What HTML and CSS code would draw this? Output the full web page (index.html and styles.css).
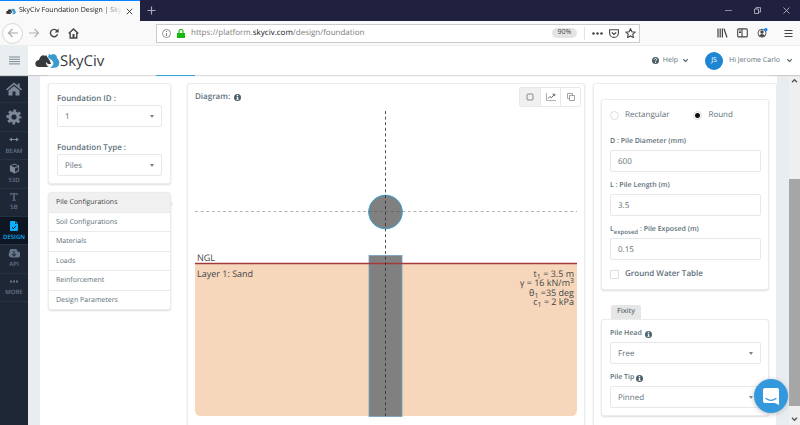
FILE: index.html
```html
<!DOCTYPE html>
<html lang="en">
<head>
<meta charset="utf-8">
<title>SkyCiv Foundation Design</title>
<link rel="stylesheet" href="styles.css">
</head>
<body>
<svg class="defs" aria-hidden="true">
  <symbol id="mark" viewBox="0 0 25 16">
    <path fill="#373a3d" d="M1 13C-1 9 2 7 4 7C5 3 8 1 10 3L11 2L13 5L15 8L16 11L13 11L11 9C11 12 12 13 14 14H4Q2 14 1 13Z"/>
    <path fill="#3b9bd0" d="M13 4L14 1L16 2L18 1C20 1 22 2 22 5C24 7 25 9 24 11C24 14 21 15 15 15C18 13 19 11 18 9C17 6 15 7 13 4Z"/>
  </symbol>
  <symbol id="info" viewBox="0 0 10 10">
    <circle cx="5" cy="5" r="5" fill="#4b626d"/>
    <path fill="#fff" d="M4 1.4h2v1.5H4zM3.5 3.9H6v3.4h.8v1H3.4v-1h.8V4.9h-.7z"/>
  </symbol>
  <symbol id="chev" viewBox="0 0 8 6"><path d="M1.3 1.3L4 4.2L6.7 1.3" fill="none" stroke="#5d707a" stroke-width="1.5"/></symbol>
</svg>

<div class="titlebar">
  <div class="tab">
    <svg width="10" height="7"><use href="#mark"/></svg>
    <span class="tab-title">SkyCiv Foundation Design | Sky</span>
    <button class="plain" aria-label="Close tab"><svg width="7" height="7" viewBox="0 0 7 7"><path d="M.8.8l5.4 5.4M6.2.8L.8 6.2" stroke="#444"/></svg></button>
  </div>
  <button class="plain new-tab" aria-label="New tab"><svg width="9" height="9" viewBox="0 0 9 9"><path d="M4.5.5v8M.5 4.5h8" stroke="#a9a9ba" stroke-width="1.2"/></svg></button>
  <div class="window-buttons">
    <button class="plain" aria-label="Minimize"><svg width="7" height="7" viewBox="0 0 7 7"><path d="M0 3.5h7" stroke="#a5a5b6" stroke-width=".8"/></svg></button>
    <button class="plain" aria-label="Restore"><svg width="7" height="7" viewBox="0 0 7 7"><path d="M.5 2h4v4.500h-4zM2 2V.6h4.500v4.400H4.600" fill="none" stroke="#c4c4d0" stroke-width=".8"/></svg></button>
    <button class="plain" aria-label="Close"><svg width="7" height="7" viewBox="0 0 7 7"><path d="M.5.5l6 6M6.500.5l-6 6" stroke="#c4c4d0" stroke-width=".8"/></svg></button>
  </div>
</div>

<div class="toolbar">
  <button class="plain back" aria-label="Back"><svg width="12" height="10" viewBox="0 0 12 10"><path d="M5.500 1L1.500 5l4 4M1.500 5H11" fill="none" stroke="#aaa" stroke-width="1.200"/></svg></button>
  <button class="plain fwd" aria-label="Forward"><svg width="12" height="10" viewBox="0 0 12 10"><path d="M6.500 1l4 4l-4 4M10.500 5H1" fill="none" stroke="#b2b2b2" stroke-width="1.200"/></svg></button>
  <button class="plain" aria-label="Reload"><svg width="10" height="10" viewBox="0 0 10 10"><path d="M8 2.700A3.700 3.700 0 1 0 8.600 6.300" fill="none" stroke="#444" stroke-width="1.400"/><path d="M9.600.5v4H5.600z" fill="#444"/></svg></button>
  <button class="plain" aria-label="Home"><svg width="11" height="11" viewBox="0 0 11 11"><path d="M.7 5.600L5.500 1l4.800 4.600M2.200 5v5h6.600V5" fill="none" stroke="#444" stroke-width="1.400"/><path d="M4.500 6h2v4h-2z" fill="#444"/></svg></button>
  <div class="urlbar">
    <svg width="9" height="9" viewBox="0 0 9 9"><circle cx="4.500" cy="4.500" r="4" fill="none" stroke="#777" stroke-width=".8"/><path d="M4.500 2v1M4.500 4v3" stroke="#777"/></svg>
    <svg width="8" height="9" viewBox="0 0 8 9"><path d="M0 4h8v5H0z" fill="#16b80d"/><path d="M2 4.500V2.500a2 2 0 0 1 4 0v2" fill="none" stroke="#16b80d" stroke-width="1.200"/></svg>
    <span class="url">https://platform.<b>skyciv.com</b>/design/foundation</span>
    <span class="zoom">90%</span>
    <span class="url-sep"></span>
    <svg width="11" height="3" viewBox="0 0 11 3" fill="#444"><circle cx="1.500" cy="1.500" r="1.300"/><circle cx="5.500" cy="1.500" r="1.300"/><circle cx="9.500" cy="1.500" r="1.300"/></svg>
    <svg width="10" height="9" viewBox="0 0 10 9" fill="none" stroke="#444" stroke-width="1.100"><path d="M.6.8h8.800v3.400a4.400 4.200 0 0 1-8.800 0z"/><path d="M2.800 3.500L5 5.500l2.200-2"/></svg>
    <svg width="11" height="10" viewBox="0 0 11 10"><path d="M5.500.8l1.400 2.900 3.300.4-2.400 2.200.6 3.200-2.900-1.600-2.900 1.600.6-3.200L.8 4.100l3.300-.4z" fill="none" stroke="#444" stroke-width="1.100"/></svg>
  </div>
  <div class="tools">
    <svg width="11" height="10" viewBox="0 0 11 10" fill="none" stroke="#444" stroke-width="1.200"><path d="M1 .5v9M3.200.5v9M5.400.5v9M7 .8l3 8.700"/></svg>
    <svg width="11" height="10" viewBox="0 0 11 10" fill="none" stroke="#444" stroke-width="1.100"><rect x=".7" y=".9" width="9.600" height="8" rx="1"/><path d="M5 1v8M2 3h2M2 4.500h2"/></svg>
    <svg width="11" height="10" viewBox="0 0 11 10"><circle cx="5" cy="5.200" r="4" fill="none" stroke="#555"/><circle cx="5" cy="4" r="1.700" fill="#444"/><path d="M2 7.500q3-3 6 0q-3 2.500-6 0" fill="#444"/><circle cx="8.800" cy="1.800" r="1.700" fill="#0a84ff"/></svg>
    <button class="plain" aria-label="Menu"><svg width="9" height="9" viewBox="0 0 9 9"><path d="M.5 1.500h8M.5 4.500h8M.5 7.500h8" stroke="#444" stroke-width="1.100"/></svg></button>
  </div>
</div>

<header class="app-header">
  <button class="plain burger" aria-label="Toggle sidebar"><svg width="11" height="9" viewBox="0 0 11 9"><path d="M0 1h11M0 3.300h11M0 5.600h11M0 7.900h11" stroke="#7f8b93" stroke-width="1"/></svg></button>
  <a class="brand" href="#"><svg width="25" height="16"><use href="#mark"/></svg><span>SkyCiv</span></a>
  <button class="plain help"><svg width="7" height="7" viewBox="0 0 10 10"><circle cx="5" cy="5" r="5" fill="#4b5e68"/><path d="M3.300 3.800c0-2.300 3.500-2.200 3.500-.1C6.800 5 5 4.800 5 6.300M5 7.200v1.300" fill="none" stroke="#fff" stroke-width="1.300"/></svg>Help<svg width="7" height="5"><use href="#chev"/></svg></button>
  <button class="plain user"><span class="avatar">JS</span>Hi Jerome Carlo<svg width="7" height="5"><use href="#chev"/></svg></button>
</header>

<div class="shell">
  <div class="rail">
    <nav class="sidebar">
      <a href="#" aria-label="Home"><svg width="16" height="14" viewBox="0 0 16 14" fill="#7c8898"><path d="M8 .5L0 7.200l1 1.200L8 2.600l7 5.800 1-1.200-2.300-2V1.500h-2V3.600z"/><path d="M8 4L2.500 8.500V13.500h4V9.500h3v4h4v-5z"/></svg></a>
      <a href="#" aria-label="Settings"><svg width="16" height="16" viewBox="0 0 16 16"><circle cx="8" cy="8" r="4.200" fill="none" stroke="#7c8898" stroke-width="3.200"/><circle cx="8" cy="8" r="6.300" fill="none" stroke="#7c8898" stroke-width="2.600" stroke-dasharray="2.700 2.248" stroke-dashoffset="1.350"/></svg></a>
      <a href="#"><svg width="10" height="5" viewBox="0 0 10 5"><path d="M1 2.500h8" stroke="#7c8898"/><path d="M0 2.500L3 .5v4zM10 2.500L7 .5v4z" fill="#7c8898"/></svg>BEAM</a>
      <a href="#"><svg width="11" height="11" viewBox="0 0 11 11"><path d="M5.500.6l4.600 1.900v5.800L5.500 10.400.9 8.300V2.500z" fill="#7c8898"/><path d="M1.800 2.800L5.500 1.400l3.700 1.400-3.700 1.600z" fill="#222c3b"/><path d="M6 5.200l3.200-1.300v3.700L6 9.100z" fill="#222c3b"/></svg>S3D</a>
      <a href="#"><svg width="8" height="8" viewBox="0 0 8 8"><path d="M.3.300h7.400v2h-.8L6.500 1.300H4.700v5.500l1 .3v.6H2.300v-.6l1-.3V1.300H1.500l-.4 1H.3z" fill="#66758a"/></svg>SB</a>
      <a href="#" class="active"><svg width="8" height="10" viewBox="0 0 8 10"><path d="M1 0h4v3h3v6q0 1-1 1H1q-1 0-1-1V1q0-1 1-1zM5.500 0L8 2.500H5.500z" fill="#0bb0fc"/><path d="M2 6.500l1.300 1.200L6 5" fill="none" stroke="#0d1622"/></svg>DESIGN</a>
      <a href="#"><svg width="12" height="9" viewBox="0 0 12 9"><path d="M3 8.500A3 3 0 0 1 1.500 3.500A4 3.800 0 0 1 9.500 2.500A3 3 0 0 1 9.500 8.500z" fill="#66758a"/><path d="M6 2v5M4 5l2 2.300L8 5" fill="none" stroke="#1d2736"/></svg>API</a>
      <a href="#"><svg width="8" height="3" viewBox="0 0 8 3" fill="#66758a"><path d="M0 .5h2v2H0zM3 .5h2v2H3zM6 .5h2v2H6z"/></svg>MORE</a>
    </nav>
  </div>

  <main class="page">
    <div class="tabline"><span></span></div>
    <div class="columns">
      <div class="left">
        <section class="card setup">
          <label for="fid">Foundation ID :</label>
          <div class="select"><select id="fid"><option>1</option></select></div>
          <label for="ftype">Foundation Type :</label>
          <div class="select"><select id="ftype"><option>Piles</option></select></div>
        </section>
        <nav class="card steps">
          <a href="#" class="current">Pile Configurations</a>
          <a href="#">Soil Configurations</a>
          <a href="#">Materials</a>
          <a href="#">Loads</a>
          <a href="#">Reinforcement</a>
          <a href="#">Design Parameters</a>
        </nav>
      </div>

      <section class="card diagram">
        <div class="diagram-head">
          <h2>Diagram:</h2>
          <svg width="7" height="7"><use href="#info"/></svg>
          <div class="views">
            <button class="on" aria-label="Section view"><svg width="8" height="8" viewBox="0 0 8 8"><rect x="1" y="1" width="6" height="6" rx="1" fill="none" stroke="#888"/></svg></button>
            <button aria-label="Graph view"><svg width="10" height="8" viewBox="0 0 10 8"><path d="M.5 0v7.500H10" fill="none" stroke="#999" stroke-width=".8"/><path d="M2 5.500l2-2 1.300 1.200L8.500 1.500M6.500 1.200h2.300v2" fill="none" stroke="#666"/></svg></button>
            <button aria-label="Copy"><svg width="8" height="8" viewBox="0 0 8 8"><path d="M2.500 2.500h5v5h-5zM2.500 5.500h-2v-5h5v2" fill="none" stroke="#999" stroke-width=".9"/></svg></button>
          </div>
        </div>
        <div class="canvas">
          <svg class="drawing" viewBox="0 0 382 307" role="img" aria-label="Pile plan and elevation">
            <path d="M0 154h382v146q0 6-6 6H6q-6 0-6-6z" fill="#f6d7bc"/>
            <rect x="174" y="145.500" width="33" height="161" fill="#808080" stroke="#6da3c4" stroke-width=".8"/>
            <circle cx="190.500" cy="102" r="16.800" fill="#808080" stroke="#35a3d5" stroke-width="1"/>
            <path d="M0 153.500h382" stroke="#a23a3c" stroke-width="1.400"/>
            <path d="M0 101.500h382" stroke="#444" stroke-opacity=".4" stroke-width="1" stroke-dasharray="3 2.600"/>
            <path d="M190.500 1v305" stroke="#2c2c2c" stroke-opacity=".8" stroke-width="1" stroke-dasharray="3 2.600"/>
            <text x="2" y="151">NGL</text>
            <text x="2" y="167">Layer 1: Sand</text>
            <g text-anchor="end">
              <text x="379" y="167">t<tspan class="sub" dy="2">1</tspan><tspan dy="-2"> = 3.5 m</tspan></text>
              <text x="379" y="176">γ = 16 kN/m<tspan class="sub" dy="-3">3</tspan></text>
              <text x="379" y="186">θ<tspan class="sub" dy="2">1</tspan><tspan dy="-2"> =35 deg</tspan></text>
              <text x="379" y="195">c<tspan class="sub" dy="2">1</tspan><tspan dy="-2"> = 2 kPa</tspan></text>
            </g>
          </svg>
        </div>
      </section>

      <section class="card props">
        <form class="card form">
          <div class="shape">
            <label><input type="radio" name="shape">Rectangular</label>
            <label><input type="radio" name="shape" checked>Round</label>
          </div>
          <div class="field"><label for="dia">D : Pile Diameter (mm)</label><input id="dia" type="text" value="600"></div>
          <div class="field"><label for="len">L : Pile Length (m)</label><input id="len" type="text" value="3.5"></div>
          <div class="field"><label for="exp">L<sub>exposed</sub> : Pile Exposed (m)</label><input id="exp" type="text" value="0.15"></div>
          <label class="check"><input type="checkbox">Ground Water Table</label>
        </form>
        <h3>Fixity</h3>
        <form class="card form fixity">
          <div class="field"><label for="head">Pile Head&nbsp; <svg width="7" height="7"><use href="#info"/></svg></label><div class="select"><select id="head"><option>Free</option></select></div></div>
          <div class="field"><label for="tip">Pile Tip <svg width="7" height="7"><use href="#info"/></svg></label><div class="select"><select id="tip"><option>Pinned</option></select></div></div>
        </form>
      </section>
    </div>
  </main>

  <div class="scrollbar" aria-hidden="true">
    <svg width="7" height="5" viewBox="0 0 8 6"><path d="M1 5L4 2l3 3" fill="none" stroke="#555" stroke-width="1.600"/></svg>
    <div class="thumb"></div>
    <svg width="7" height="5" viewBox="0 0 8 6"><path d="M1 1l3 3l3-3" fill="none" stroke="#555" stroke-width="1.600"/></svg>
  </div>
</div>
<button class="plain chat" aria-label="Open chat"><svg width="18" height="19" viewBox="0 0 18 19"><path d="M3 1h12q2 0 2 2v15l-4-2H3q-2 0-2-2V3q0-2 2-2z" fill="#fff"/><path d="M4 11.500q5 3.600 10 0" fill="none" stroke="#3398dc" stroke-width="1.200" stroke-linecap="round"/></svg></button>
</body>
</html>
```
FILE: styles.css
```css
* { box-sizing: border-box; }
body {
  margin: 0;
  height: 100vh;
  overflow: hidden;
  display: flex;
  flex-direction: column;
  font: 8px/16px "Open Sans", "Noto Sans", sans-serif;
  text-rendering: geometricPrecision;
  color: #5e6f79;
  background: #fff;
}
svg { display: block; flex: none; }
a { color: inherit; text-decoration: none; }
button, input, select { font: inherit; color: inherit; margin: 0; text-rendering: inherit; }
.defs { position: absolute; width: 0; height: 0; }
.plain { display: flex; align-items: center; justify-content: center; padding: 0; border: 0; background: none; }

/* browser frame */
.titlebar { flex: none; height: 21px; display: flex; background: #20213f; }
.tab { width: 140px; display: flex; align-items: center; gap: 3px; padding: 0 7px 0 6px; border-top: 1px solid #0a84ff; background: #f9f9fa; color: #222; font-size: 7px; }
.tab-title { flex: 1; line-height: 18px; white-space: nowrap; -webkit-mask-image: linear-gradient(90deg, #000 80%, transparent); mask-image: linear-gradient(90deg, #000 80%, transparent); }
.new-tab { width: 22px; }
.window-buttons { margin-left: auto; display: flex; gap: 22px; padding-right: 10px; }
.toolbar { flex: none; height: 25px; display: flex; align-items: center; background: #f9f9fa; border-bottom: 1px solid #eee; gap: 9px; padding-left: 2px; color: #444; }
.back { width: 21px; height: 21px; border: 1px solid #d5d5d5; border-radius: 50%; background: #fdfdfd; }
.fwd { margin-left: -4px; }
.urlbar { flex: 1; height: 19px; margin-left: 68px; display: flex; align-items: center; gap: 5px; padding: 0 2px 0 5px; border: 1px solid #ccc; background: #fff; }
.url { flex: 1; color: #7d7d7d; white-space: nowrap; line-height: 18px; }
.url b { font-weight: 400; color: #111; }
.zoom { width: 25px; height: 10px; line-height: 10px; text-align: center; border-radius: 5px; background: #e4e4e4; font-size: 7px; }
.url-sep { width: 1px; height: 13px; margin: 0 2px; background: #e3e3e3; }
.urlbar > svg { margin-right: 1px; }
.tools { display: flex; align-items: center; gap: 9px; margin-left: 68px; padding-right: 7px; }
.tools button { margin-left: 7px; }

/* application header */
.app-header { flex: none; height: 29px; display: flex; align-items: center; position: relative; background: #fff; box-shadow: 0 1px 1px #ccc; font-size: 7px; line-height: 18px; }
.burger { width: 28px; height: 100%; background: #e9eef1; }
.brand { display: flex; align-items: center; margin-left: 7px; font: 15px/20px "Open Sans", sans-serif; color: #373a3d; }
.help { gap: 4px; margin-left: auto; margin-right: 16px; }
.user { gap: 6px; padding-right: 7px; }
.avatar { width: 18px; height: 18px; border-radius: 50%; background: #1e85d2; color: #fff; }

/* workspace */
.shell { flex: 1; min-height: 0; display: flex; background: #e9edf1; }
.rail { width: 28px; background: #1d2736; }
.sidebar { height: 227px; display: grid; grid-auto-rows: 1fr; color: #66758a; font: 600 6px/7px "Open Sans", sans-serif; }
.sidebar a { display: flex; flex-direction: column; align-items: center; justify-content: center; gap: 3px; border-bottom: 1px solid #263244; }
.sidebar a:nth-child(3), .sidebar a:nth-child(8) { gap: 6px; padding-top: 2px; }
.sidebar .active { background: #0d1622; color: #0bb0fc; }
.page { flex: 1; min-width: 0; margin: 0 12px; background: #fff; overflow: hidden; }
.tabline { height: 1px; margin: 0 8px; background: #ddd; position: relative; z-index: 1; }
.tabline span { display: block; width: 39px; height: 1px; margin-left: 108px; background: #35a3dc; }
.columns { height: 100%; display: grid; grid-template-columns: 123px minmax(0, 1fr) 184px; padding: 7px 0 0 8px; }
.card { background: #fff; border: 1px solid #eaecee; border-radius: 3px; box-shadow: 0 1px 2px #ddd; }
.setup { padding: 7px 8px; }
.setup label { display: block; height: 14px; line-height: 16px; font-weight: 600; }
.setup .select + label { margin-top: 13px; }
.select { position: relative; }
.select::after { content: ""; position: absolute; right: 8px; top: 10px; border: 2px solid transparent; border-top: 3px solid #75838b; border-bottom: 0; }
select, input[type="text"] { display: block; width: 100%; height: 22px; padding: 1px 7px 0; border: 1px solid #e6e8ea; border-radius: 2px; background: #fff; appearance: none; outline: 0; }
.steps { height: 118px; margin-top: 8px; display: grid; position: relative; font-size: 7px; }
.steps a { display: flex; align-items: center; padding: 2px 0 0 7px; border-bottom: 1px solid #e8eaec; }
.steps a:last-child { border-bottom: 0; }
.steps .current { background: #f0f0f0; color: #444; }
.steps::after { content: ""; position: absolute; left: 100%; top: 8px; border: 3px solid transparent; border-left-color: #e6e6e6; border-right: 0; }
.diagram { margin: 0 8px 0 16px; padding: 3px 3px 3px 7px; border-bottom: 0; }
.diagram-head { display: flex; align-items: center; gap: 4px; height: 20px; }
h2, h3 { margin: 0; font-size: 8px; line-height: 18px; font-weight: 600; }
.views { display: flex; margin-left: auto; border: 1px solid #e8e8e8; border-radius: 2px; }
.views button { width: 20px; height: 18px; display: flex; align-items: center; justify-content: center; padding: 0; border: 0; border-left: 1px solid #e8e8e8; background: #fff; }
.views .on { background: #f0f0f0; border-left: 0; }
.canvas { padding: 3px 4px 0 0; }
.drawing { width: 100%; font-size: 9px; fill: #444; }
.sub { font-size: 7px; }
.props { padding: 15px 7px 0; border-bottom: 0; }
.form { padding: 7px 7px 7px 8px; }
.shape { display: flex; gap: 24px; margin-bottom: 11px; }
.shape label, .check { display: flex; align-items: center; gap: 6px; height: 16px; line-height: 18px; }
input[type="radio"], input[type="checkbox"] { appearance: none; width: 9px; height: 9px; border: 1px solid #ddd; background: #fff; }
input[type="radio"] { border-radius: 50%; }
input[type="radio"]:checked { background: radial-gradient(#111 0 2px, #fff 3px); }
input[type="checkbox"] { border-radius: 1px; }
.field { margin-bottom: 6px; }
.field label { display: flex; align-items: center; height: 16px; line-height: 18px; white-space: pre; font-size: 7px; font-weight: 600; }
.field sub { font-size: 6px; line-height: 8px; vertical-align: baseline; padding-top: 4px; }
.check { font-weight: 600; }
h3 { display: table; height: 14px; line-height: 14px; font-size: 7px; margin: 15px 0 0 10px; padding: 0 6px; border-radius: 2px 2px 0 0; background: #e6e6e6; }
.fixity { padding-top: 6px; padding-bottom: 1px; }
.scrollbar { width: 11px; display: flex; flex-direction: column; align-items: center; padding: 3px 0; background: #efefef; }
.thumb { width: 100%; height: 227px; margin-top: auto; background: #a6a6a6; margin-bottom: 11px; }
.chat { position: fixed; right: 12px; bottom: 12px; width: 34px; height: 34px; border-radius: 50%; background: #3398dc; box-shadow: 0 1px 5px #bbb; }
```
